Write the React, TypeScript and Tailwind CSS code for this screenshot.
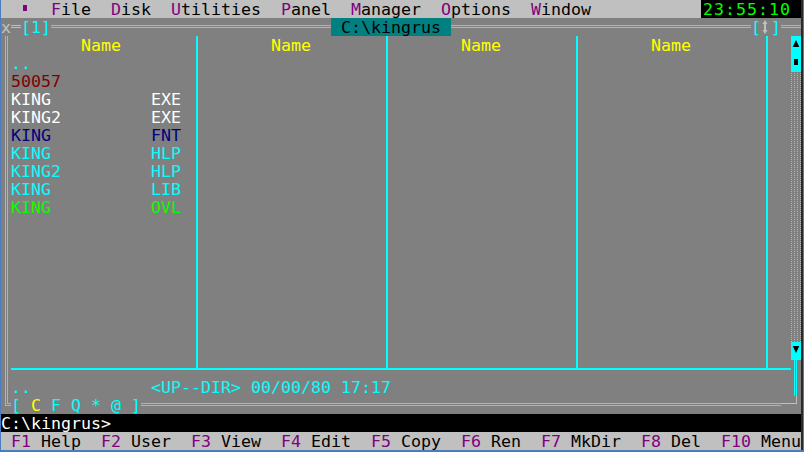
import React from "react";

const files = [
  { name: "..", ext: "", color: "text-[#00ffff]" },
  { name: "50057", ext: "", color: "text-[#800000]" },
  { name: "KING", ext: "EXE", color: "text-white" },
  { name: "KING2", ext: "EXE", color: "text-white" },
  { name: "KING", ext: "FNT", color: "text-[#000080]" },
  { name: "KING", ext: "HLP", color: "text-[#00ffff]" },
  { name: "KING2", ext: "HLP", color: "text-[#00ffff]" },
  { name: "KING", ext: "LIB", color: "text-[#00ffff]" },
  { name: "KING", ext: "OVL", color: "text-[#00ff00]" },
];

const menu = ["File", "Disk", "Utilities", "Panel", "Manager", "Options", "Window"];

const keys = [
  ["F1", "Help"],
  ["F2", "User"],
  ["F3", "View"],
  ["F4", "Edit"],
  ["F5", "Copy"],
  ["F6", "Ren"],
  ["F7", "MkDir"],
  ["F8", "Del"],
  ["F10", "Menu"],
];

// double horizontal frame line (═)
function DLine({ className }: { className: string }) {
  return <div className={`h-[3px] mt-[7px] border-y ${className}`} />;
}

function Divider() {
  return (
    <div className="w-[10px] pl-[5px] flex">
      <div className="w-[2px] bg-[#00ffff]" />
    </div>
  );
}

function Column({ items }: { items?: typeof files }) {
  return (
    <div className="w-[180px] flex flex-col">
      <div className="h-[18px] text-center text-[#ffff00]">Name</div>
      {items?.map((f, i) => (
        <div key={i} className={`h-[18px] flex whitespace-pre ${f.color}`}>
          <span className="w-[140px]">{f.name}</span>
          <span>{f.ext}</span>
        </div>
      ))}
    </div>
  );
}

export default function App() {
  return (
    <div className="w-[804px] h-[452px] bg-[#4a7cbf] pl-[1px] pr-[1px] pb-[2px] font-['DejaVu_Sans_Mono','Liberation_Mono',monospace] text-[16.61px] leading-[20px]">
      <div className="w-[802px] h-[450px] flex flex-col border-r-2 border-[#2a2a2a]">
        {/* Menu bar */}
        <div className="h-[18px] flex bg-[#c0c0c0] text-black pl-[20px]">
          <div className="w-[10px] pl-[2px] pt-[5px]">
            <div className="w-[4px] h-[6px] bg-[#800080]" />
          </div>
          {menu.map((m) => (
            <span key={m} className="ml-[20px]">
              <span className="text-[#800080]">{m[0]}</span>
              {m.slice(1)}
            </span>
          ))}
          <div className="flex-1" />
          <div className="w-[100px] h-[18px] bg-black text-[#00ff00] pl-[2px] tracking-[1px]">23:55:10</div>
        </div>

        {/* Panel */}
        <div className="h-[396px] flex flex-col bg-[#808080]">
          {/* top frame */}
          <div className="h-[18px] flex">
            <span className="w-[10px] text-[#c0c0c0]">x</span>
            <DLine className="w-[10px] border-[#c0c0c0]" />
            <span className="w-[30px] text-[#00ffff]">[1]</span>
            <DLine className="w-[280px] border-[#00ffff]" />
            <span className="w-[120px] h-[18px] bg-[#008080] text-black whitespace-pre">{" C:\\kingrus "}</span>
            <DLine className="w-[300px] border-[#00ffff]" />
            <span className="w-[30px] flex text-[#00ffff]">
              <span className="w-[10px]">[</span>
              <svg width="10" height="18" viewBox="0 0 10 18">
                <polygon points="4,2 1.5,6 6.5,6" fill="#c0c0c0" />
                <rect x="3" y="5.5" width="2" height="7" fill="#c0c0c0" />
                <polygon points="4,16 1.5,12 6.5,12" fill="#c0c0c0" />
              </svg>
              <span className="w-[10px]">]</span>
            </span>
            <DLine className="w-[20px] border-[#00ffff]" />
          </div>

          {/* body */}
          <div className="h-[378px] flex">
            {/* left frame */}
            <div className="w-[10px] pl-[4px]">
              <div className="w-[6px] h-[370px] border-l border-b border-[#00ffff]">
                <div className="ml-[1px] w-[4px] h-[368px] border-l border-b border-[#00ffff]" />
              </div>
            </div>

            <div className="w-[790px] flex flex-col">
              <div className="h-[360px] flex">
                <div className="w-[780px] flex flex-col">
                  <div className="h-[334px] flex border-b-2 border-[#00ffff]">
                    <Column items={files} />
                    <Divider />
                    <Column />
                    <Divider />
                    <Column />
                    <Divider />
                    <Column />
                    <Divider />
                    <div className="w-[20px]" />
                  </div>
                  <div className="h-[8px]" />
                  <div className="h-[18px] whitespace-pre text-[#00ffff]">
                    {"..            <UP--DIR> 00/00/80 17:17"}
                  </div>
                </div>

                {/* scrollbar */}
                <div className="w-[10px] flex flex-col">
                  <div className="h-[18px] bg-[#00ffff]">
                    <svg width="10" height="18" viewBox="0 0 10 18">
                      <polygon points="5,4 1.7,11 8.3,11" fill="#000" />
                    </svg>
                  </div>
                  <div className="h-[18px] bg-[#00ffff]">
                    <svg width="10" height="18" viewBox="0 0 10 18">
                      <rect x="3" y="5" width="4" height="6" fill="#000" />
                    </svg>
                  </div>
                  <div className="h-[270px] bg-[image:linear-gradient(#808080_1px,transparent_1px),linear-gradient(90deg,#00ffff_1px,transparent_1px)] bg-[length:100%_2px,3px_100%]" />
                  <div className="h-[18px] bg-[#00ffff]">
                    <svg width="10" height="18" viewBox="0 0 10 18">
                      <polygon points="1.7,4 8.3,4 5,11" fill="#000" />
                    </svg>
                  </div>
                  <div className="h-[36px] pl-[3px]">
                    <div className="w-[3px] h-full border-x border-[#00ffff]" />
                  </div>
                </div>
              </div>

              {/* bottom frame */}
              <div className="h-[18px] flex">
                <span className="w-[130px] whitespace-pre text-[#00ffff]">
                  {"[ "}
                  <span className="text-[#ffff00]">C</span>
                  {" F Q * @ ]"}
                </span>
                <DLine className="w-[640px] border-[#00ffff]" />
                <div className="w-[16px] h-[8px] border-r border-b border-[#c0c0c0]" />
              </div>
            </div>
          </div>
        </div>

        {/* command line */}
        <div className="h-[18px] bg-black text-white whitespace-pre">{"C:\\kingrus>"}</div>

        {/* key bar */}
        <div className="h-[18px] bg-[#c0c0c0] text-black whitespace-pre">
          {" "}
          {keys.map(([k, l], i) => (
            <React.Fragment key={k}>
              {i > 0 && "  "}
              <span className="text-[#800080]">{k}</span>
              {" " + l}
            </React.Fragment>
          ))}
        </div>
      </div>
    </div>
  );
}
